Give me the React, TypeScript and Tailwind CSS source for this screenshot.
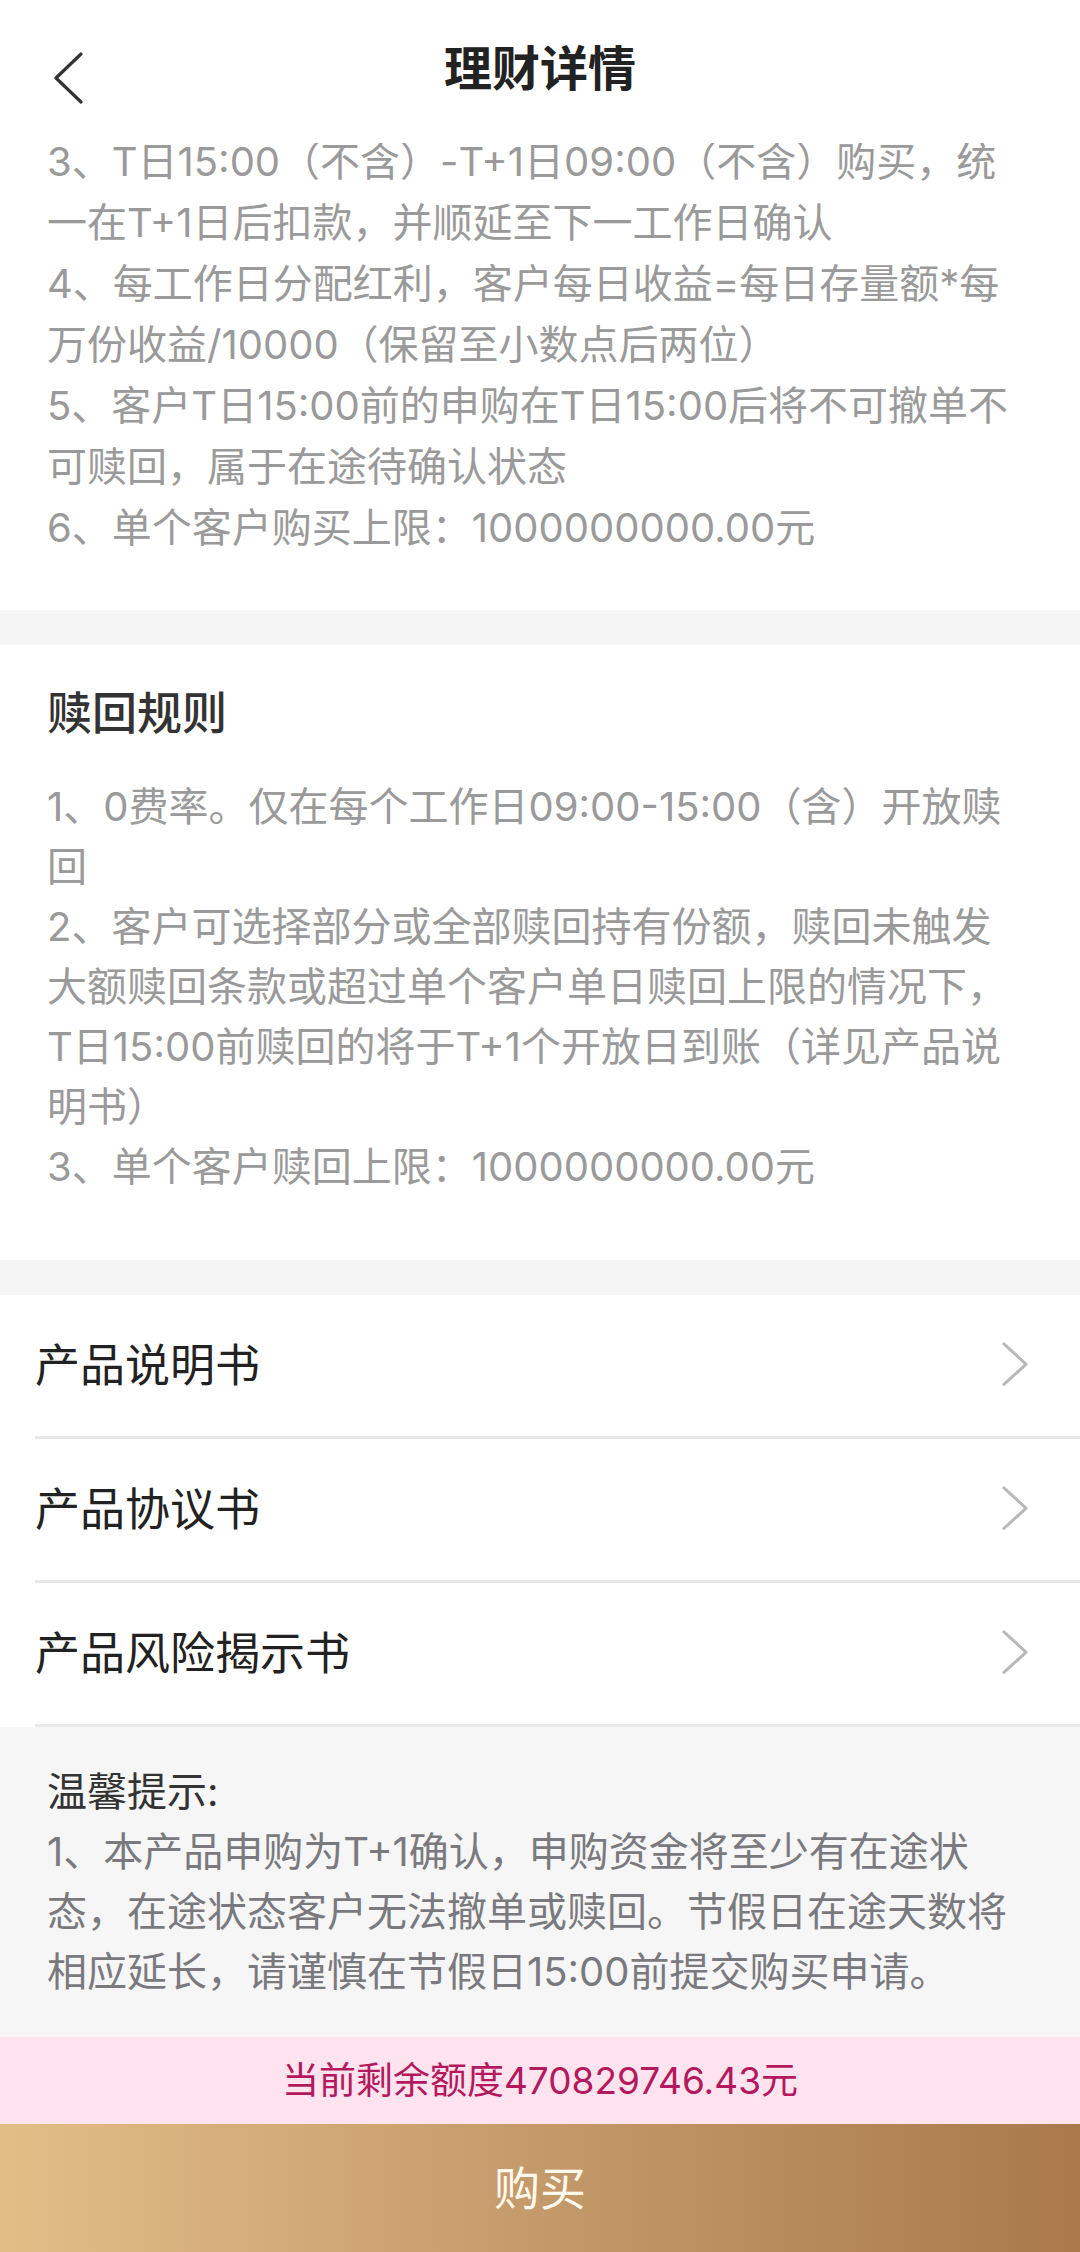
import React from 'react';

const purchaseRules = [
  '3、T日15:00（不含）-T+1日09:00（不含）购买，统一在T+1日后扣款，并顺延至下一工作日确认',
  '4、每工作日分配红利，客户每日收益=每日存量额*每万份收益/10000（保留至小数点后两位）',
  '5、客户T日15:00前的申购在T日15:00后将不可撤单不可赎回，属于在途待确认状态',
  '6、单个客户购买上限：1000000000.00元',
];

const redeemRules = [
  '1、0费率。仅在每个工作日09:00-15:00（含）开放赎回',
  '2、客户可选择部分或全部赎回持有份额，赎回未触发大额赎回条款或超过单个客户单日赎回上限的情况下，T日15:00前赎回的将于T+1个开放日到账（详见产品说明书）',
  '3、单个客户赎回上限：1000000000.00元',
];

const docs = ['产品说明书', '产品协议书', '产品风险揭示书'];

const font = 'font-["Inter","Noto_Sans_CJK_SC",sans-serif]';

const Chevron: React.FC<{ dir: 'left' | 'right'; className?: string }> = ({ dir, className }) => (
  <svg viewBox="0 0 30 52" className={className} fill="none" stroke="currentColor" strokeWidth={3.2} strokeLinecap="round" strokeLinejoin="round">
    {dir === 'left' ? <path d="M27 2 L2 26 L27 50" /> : <path d="M3 2 L27 24 L3 46" />}
  </svg>
);

export default function App() {
  return (
    <div className={`${font} w-[1080px] h-[2252px] flex flex-col bg-white overflow-hidden`}>
      {/* header */}
      <div className="relative z-10 h-[143px] shrink-0 bg-white flex items-center justify-center">
        <button className="absolute left-[54px] top-[52px] text-[#333]">
          <Chevron dir="left" className="w-[30px] h-[52px]" />
        </button>
        <h1 className="text-[48px] leading-none font-bold text-[#222] -mt-[6px]">理财详情</h1>
      </div>

      <div className="flex-1 flex flex-col overflow-hidden">
        {/* purchase rules (scrolled, first line partly under header) */}
        <div className="-mt-[12px] h-[479px] shrink-0 pl-[47px] pr-[60px] text-[40px] leading-[61px] text-[#9a9a9a]">
          {purchaseRules.map((r) => (
            <p key={r}>{r}</p>
          ))}
        </div>

        <div className="h-[35px] shrink-0 bg-[#f5f5f5]" />

        {/* redeem rules */}
        <div className="h-[615px] shrink-0 pl-[47px] pr-[60px] pt-[39px]">
          <h2 className="text-[45px] leading-[60px] font-medium text-[#333]">赎回规则</h2>
          <div className="mt-[33px] text-[40px] leading-[60px] text-[#9a9a9a]">
            {redeemRules.map((r) => (
              <p key={r}>{r}</p>
            ))}
          </div>
        </div>

        <div className="h-[35px] shrink-0 bg-[#f5f5f5]" />

        {/* documents */}
        <div className="shrink-0 pl-[35px]">
          {docs.map((d) => (
            <div key={d} className="h-[144px] flex items-center justify-between border-b-[3px] border-[#e8e8e8]">
              <span className="text-[45px] text-[#222]">{d}</span>
              <Chevron dir="right" className="w-[30px] h-[48px] mr-[50px] text-[#b8b8b8]" />
            </div>
          ))}
        </div>

        {/* tips */}
        <div className="flex-1 bg-[#f6f6f7] pl-[47px] pr-[60px] pt-[35px] text-[40px] leading-[60px]">
          <p className="text-[#333]">温馨提示:</p>
          <p className="text-[#7a7a7e]">
            1、本产品申购为T+1确认，申购资金将至少有在途状态，在途状态客户无法撤单或赎回。节假日在途天数将相应延长，请谨慎在节假日15:00前提交购买申请。
          </p>
        </div>

        <div className="h-[87px] shrink-0 bg-[#ffe3ee] flex items-center justify-center text-[37px] text-[#b3195c]">
          当前剩余额度470829746.43元
        </div>

        <button className="h-[128px] shrink-0 bg-gradient-to-r from-[#e2be87] via-[#c49a6a] to-[#a9794c] flex items-center justify-center text-[46px] text-[#fff8ec]">
          购买
        </button>
      </div>
    </div>
  );
}
